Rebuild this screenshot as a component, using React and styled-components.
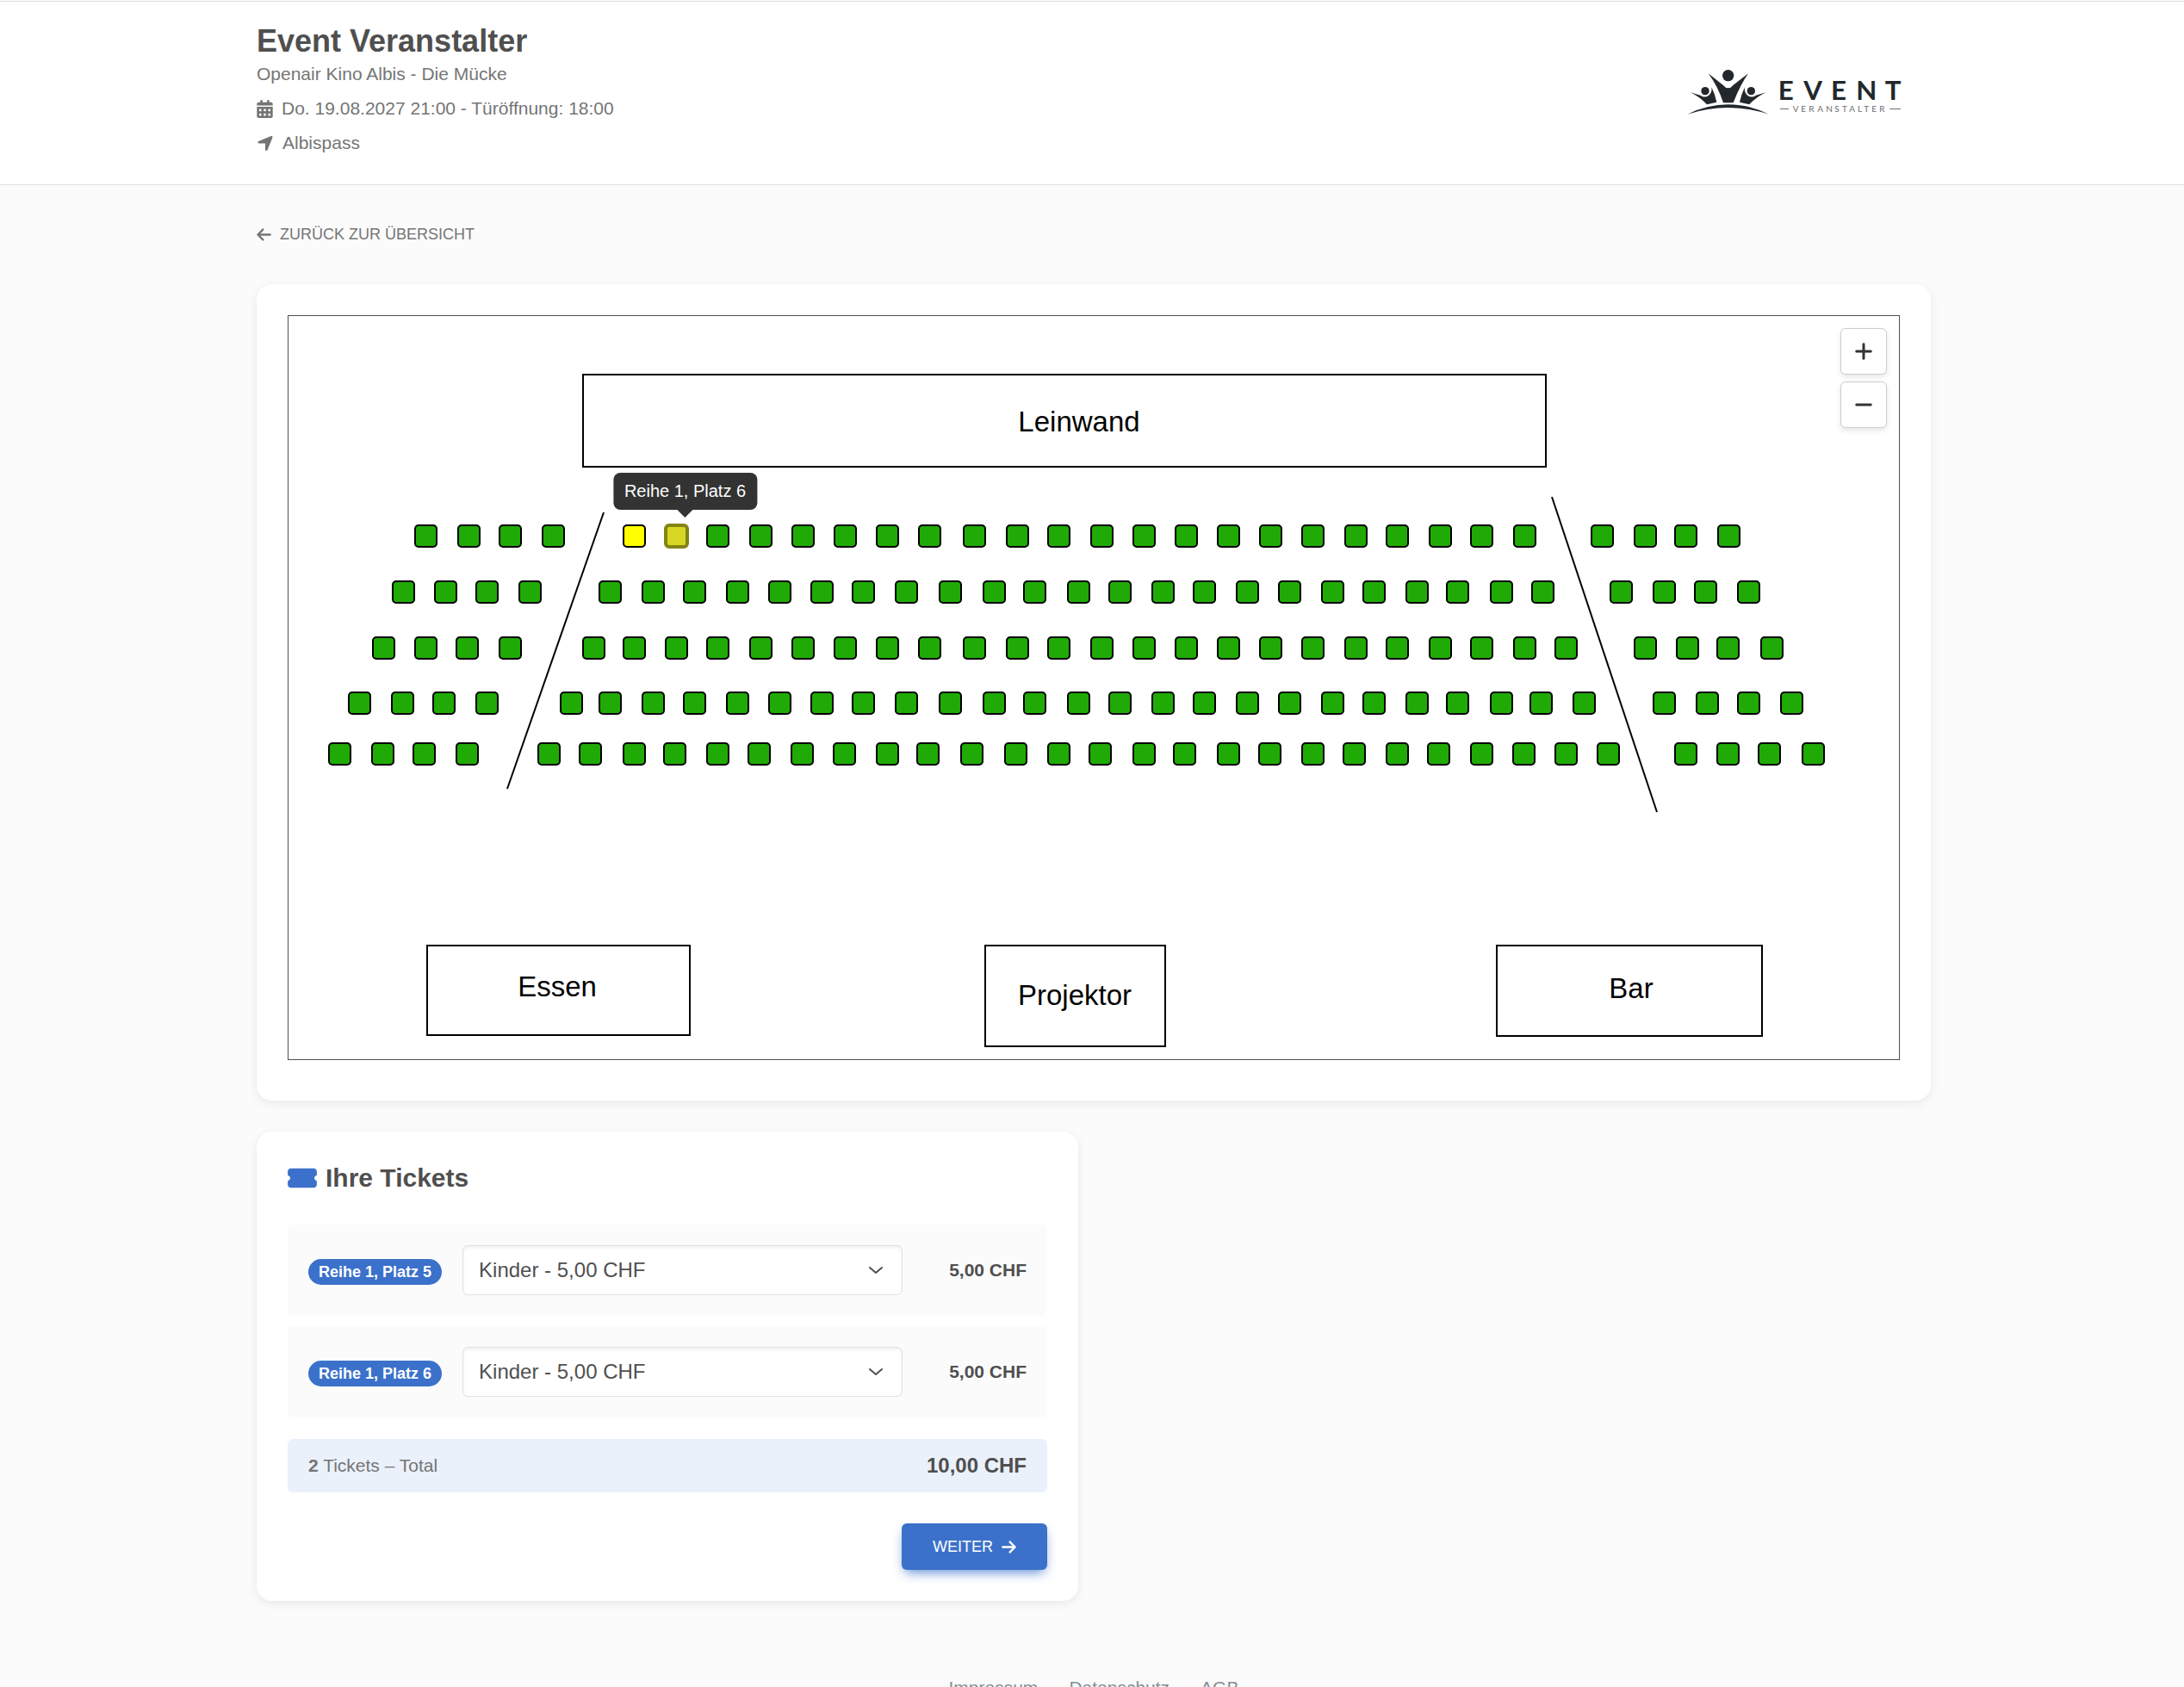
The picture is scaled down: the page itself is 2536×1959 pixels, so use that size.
import React, { useState } from 'react';
import styled, { createGlobalStyle, css } from 'styled-components';
import {
  FaArrowLeft,
  FaArrowRight,
  FaCalendarDays,
  FaLocationArrow,
  FaMinus,
  FaPlus,
  FaTicketSimple,
} from 'react-icons/fa6';

const GlobalStyle = createGlobalStyle`
  * {
    box-sizing: border-box;
  }

  body {
    margin: 0;
    background-color: #fbfbfb;
    color: #4f4f4f;
    font-family: "Liberation Sans", Arial, sans-serif;
    font-size: 24px;
    line-height: 36px;
  }
`;

const Page = styled.div`
  display: flex;
  flex-direction: column;
  padding-top: 1px;
`;

const Container = styled.div`
  width: 100%;
  max-width: 1996px;
  margin: 0 auto;
  padding: 0 24px 0 28px;
`;

const Header = styled.header`
  background-color: #fff;
  border-top: 1px solid #e0e0e0;
  border-bottom: 1px solid #e0e0e0;
`;

const HeaderInner = styled(Container)`
  display: flex;
  justify-content: space-between;
  align-items: flex-start;
  padding-top: 24px;
  padding-bottom: 28px;
`;

const EventInfo = styled.div`
  display: flex;
  flex-direction: column;
  gap: 6px;
  color: #757575;
  font-size: 21px;
  line-height: 34px;
`;

const Title = styled.h1`
  margin: 0 0 -6px;
  color: #4f4f4f;
  font-size: 36px;
  line-height: 43px;
`;

const InfoLine = styled.div`
  display: flex;
  align-items: center;
  gap: 10px;

  svg {
    width: ${({ $iconWidth }) => $iconWidth}px;
    height: 21px;
  }
`;

const LogoSvg = styled.svg`
  width: 300px;
  height: 160px;
  margin-right: 12px;
`;

const BackLink = styled.a`
  display: inline-flex;
  align-items: center;
  gap: 10px;
  margin: 44px 0;
  color: #757575;
  font-size: 18px;
  line-height: 27px;
  text-decoration: none;
  text-transform: uppercase;

  svg {
    width: 17px;
    height: 19px;
  }
`;

const Main = styled(Container)`
  display: flex;
  flex-direction: column;
  align-items: flex-start;
`;

const Card = styled.section`
  width: 100%;
  padding: 36px;
  background-color: #fff;
  border-radius: 18px;
  box-shadow: 0 3px 12px rgba(0, 0, 0, 0.08);
`;

const MapCard = styled(Card)`
  margin-bottom: 36px;
  padding-bottom: 47px;
`;

const MapFrame = styled.div`
  position: relative;
  border: 1px solid #4f4f4f;
`;

const MapSvg = styled.svg`
  display: block;
  width: 100%;
  height: auto;
  font-size: 33px;
`;

const Seat = styled.rect`
  fill: #20aa05;
  stroke: #000;
  stroke-width: 2;
  cursor: pointer;

  ${({ $selected }) => $selected && css`
    fill: #ff0;
  `}

  ${({ $active }) => $active && css`
    fill: #d8d824;
    stroke: #838316;
    stroke-width: 4;
  `}
`;

const Tooltip = styled.div`
  position: absolute;
  left: calc(461 / 1872 * 100%);
  top: calc(226 / 865 * 100%);
  transform: translate(-50%, -100%);
  padding: 10px 13px;
  background-color: #333;
  border-radius: 8px;
  color: #fff;
  font-size: 20px;
  line-height: 23px;
  white-space: nowrap;

  &::after {
    content: "";
    position: absolute;
    top: 100%;
    left: calc(50% - 9px);
    border: 9px solid transparent;
    border-top-color: #333;
    border-bottom-width: 0;
  }
`;

const ZoomControls = styled.div`
  position: absolute;
  top: 14px;
  right: 14px;
  display: flex;
  flex-direction: column;
  gap: 8px;
`;

const ZoomButton = styled.button`
  display: flex;
  align-items: center;
  justify-content: center;
  width: 54px;
  height: 54px;
  padding: 0;
  background-color: #fff;
  border: 1px solid #ccc;
  border-radius: 6px;
  box-shadow: 0 3px 6px rgba(0, 0, 0, 0.1);
  color: #333;
  font-size: 24px;
`;

const TicketCard = styled(Card)`
  width: calc(50% - 18px);
`;

const TicketTitle = styled.h2`
  display: flex;
  align-items: center;
  gap: 10px;
  margin: 0 0 36px;
  font-size: 30px;
  line-height: 36px;

  svg {
    width: 34px;
    height: 30px;
    color: #3b71ca;
  }
`;

const TicketList = styled.div`
  display: flex;
  flex-direction: column;
  gap: 12px;
`;

const TicketRow = styled.div`
  display: grid;
  grid-template-columns: auto 1fr 120px;
  align-items: center;
  gap: 24px;
  padding: 24px;
  background-color: #fbfbfb;
  border-radius: 6px;
`;

const Badge = styled.span`
  display: inline-block;
  padding: 6px 12px;
  background-color: #3b71ca;
  border-radius: 15px;
  color: #fff;
  font-size: 18px;
  font-weight: bold;
  line-height: 18px;
`;

const SelectWrap = styled.div`
  position: relative;

  svg {
    position: absolute;
    top: 50%;
    right: 21px;
    width: 20px;
    height: 20px;
    transform: translateY(-50%);
    pointer-events: none;
  }
`;

const Select = styled.select`
  display: block;
  width: 100%;
  height: 58px;
  padding: 0 54px 0 18px;
  appearance: none;
  background-color: #fff;
  border: 1px solid #e0e0e0;
  border-radius: 6px;
  box-shadow: inset 0 2px 4px rgba(0, 0, 0, 0.06);
  color: #4f4f4f;
  font: inherit;
`;

const Price = styled.div`
  font-size: 21px;
  font-weight: bold;
  text-align: right;
`;

const Total = styled.div`
  display: flex;
  justify-content: space-between;
  align-items: center;
  margin: 25px 0 36px;
  padding: 13px 24px;
  background-color: #eaf1fb;
  border-radius: 6px;
  color: #757575;
  font-size: 21px;
`;

const TotalPrice = styled.strong`
  color: #4f4f4f;
  font-size: 24px;
`;

const NextButton = styled.button`
  display: flex;
  align-items: center;
  gap: 10px;
  height: 54px;
  margin-left: auto;
  padding: 0 36px;
  background-color: #3b71ca;
  border: 0;
  border-radius: 6px;
  box-shadow: 0 6px 14px -4px rgba(59, 113, 202, 0.9);
  color: #fff;
  font-family: inherit;
  font-size: 18px;
  text-transform: uppercase;

  svg {
    width: 17px;
    height: 19px;
  }
`;

const Footer = styled.footer`
  display: flex;
  justify-content: center;
  gap: 36px;
  margin-top: 85px;
  padding-left: 4px;
  font-size: 21px;
  line-height: 32px;

  a {
    color: #858e96;
    text-decoration: none;
  }
`;

// seat centres per row: left block, middle block, right block
const rows = [
  {
    y: 257,
    left: [161, 211, 259, 309],
    middle: [403, 452, 500, 550, 599, 648, 697, 746, 798, 848, 896, 946, 995, 1044, 1093, 1142, 1191, 1241, 1289, 1339, 1387, 1437],
    right: [1527, 1577, 1624, 1674],
  },
  {
    y: 322,
    left: [135, 184, 232, 282],
    middle: [375, 425, 473, 523, 572, 621, 669, 719, 770, 821, 868, 919, 967, 1017, 1065, 1115, 1164, 1214, 1262, 1312, 1359, 1410, 1458],
    right: [1549, 1599, 1647, 1697],
  },
  {
    y: 387,
    left: [112, 161, 209, 259],
    middle: [356, 403, 452, 500, 550, 599, 648, 697, 746, 798, 848, 896, 946, 995, 1044, 1093, 1142, 1191, 1241, 1289, 1339, 1387, 1437, 1485],
    right: [1577, 1626, 1673, 1724],
  },
  {
    y: 451,
    left: [84, 134, 182, 232],
    middle: [330, 375, 425, 473, 523, 572, 621, 669, 719, 770, 821, 868, 919, 967, 1017, 1065, 1115, 1164, 1214, 1262, 1312, 1359, 1410, 1456, 1506],
    right: [1599, 1649, 1697, 1747],
  },
  {
    y: 510,
    left: [61, 111, 159, 209],
    middle: [304, 352, 403, 450, 500, 548, 598, 647, 697, 744, 795, 846, 896, 944, 995, 1042, 1093, 1141, 1191, 1239, 1289, 1337, 1387, 1436, 1485, 1534],
    right: [1624, 1673, 1721, 1772],
  },
];

const areas = [
  { label: 'Leinwand', x: 343, y: 69, width: 1118, height: 107, textX: 919, textY: 135 },
  { label: 'Essen', x: 162, y: 732, width: 305, height: 104, textX: 313, textY: 791 },
  { label: 'Projektor', x: 810, y: 732, width: 209, height: 117, textX: 914, textY: 801 },
  { label: 'Bar', x: 1404, y: 732, width: 308, height: 105, textX: 1560, textY: 793 },
];

const prices = { Kinder: 5, Erwachsene: 10 };

const formatPrice = (value) => `${value.toFixed(2).replace('.', ',')} CHF`;

const Logo = () => (
  <LogoSvg viewBox="30 -72 900 480" role="img" aria-label="Event Veranstalter">
    <g fill="#22282b">
      <circle cx="260" cy="113" r="20" />
      <path d="M191 106 L242 146 Q260 168 278 146 L330 106 Q302 146 278 208 H243 Q224 150 191 106Z" />
      <circle cx="180" cy="167" r="14" />
      <path d="M129 172 L163 182 Q181 194 195 180 Q205 170 202 153 Q214 178 220 206 L186 214 Q163 189 129 172Z" />
      <circle cx="340" cy="167" r="14" />
      <path d="M391 172 L357 182 Q339 194 325 180 Q315 170 318 153 Q306 178 300 206 L334 214 Q357 189 391 172Z" />
      <path d="M118 248 Q260 180 402 248 Q260 202 118 248Z" />
      <text x="434 523 618 706 806" y="198" fontFamily="Lato, sans-serif" fontSize="94" fontWeight="bold">EVENT</text>
    </g>
    <g fill="#6a6e70">
      <text x="485 514 541 571 601 631 657 682 711 733 760 787" y="240" fontFamily="Lato, sans-serif" fontSize="30">
        VERANSTALTER
      </text>
      <rect x="441" y="228" width="30" height="3" />
      <rect x="823" y="228" width="38" height="3" />
    </g>
  </LogoSvg>
);

const SeatMap = () => (
  <MapFrame>
    <MapSvg viewBox="1 1 1870 863" role="img" aria-label="Saalplan">
      <g fill="none" stroke="#000" strokeWidth="2">
        {areas.map((a) => (
          <rect key={a.label} x={a.x} y={a.y} width={a.width} height={a.height} />
        ))}
        <line x1="367" y1="229" x2="255" y2="550" />
        <line x1="1468" y1="211" x2="1590" y2="577" />
      </g>
      {areas.map((a) => (
        <text key={a.label} x={a.textX} y={a.textY} textAnchor="middle">{a.label}</text>
      ))}
      {rows.map((row, rowIndex) =>
        [...row.left, ...row.middle, ...row.right].map((x, i) => (
          <Seat
            key={x}
            x={x - 13}
            y={row.y - 13}
            width="25"
            height="25"
            rx="4"
            $selected={rowIndex === 0 && i === 4}
            $active={rowIndex === 0 && i === 5}
          />
        ))
      )}
    </MapSvg>
    <Tooltip role="tooltip">Reihe 1, Platz 6</Tooltip>
    <ZoomControls>
      <ZoomButton type="button" aria-label="Vergrössern"><FaPlus /></ZoomButton>
      <ZoomButton type="button" aria-label="Verkleinern"><FaMinus /></ZoomButton>
    </ZoomControls>
  </MapFrame>
);

const Ticket = ({ seat, category, onChange }) => (
  <TicketRow>
    <div>
      <Badge>{seat}</Badge>
    </div>
    <SelectWrap>
      <Select aria-label={seat} value={category} onChange={(e) => onChange(e.target.value)}>
        {Object.keys(prices).map((name) => (
          <option key={name} value={name}>{name} - {formatPrice(prices[name])}</option>
        ))}
      </Select>
      <svg viewBox="0 0 20 20" fill="none" stroke="#4f4f4f" strokeWidth="2" strokeLinecap="round" strokeLinejoin="round">
        <path d="M3 7l7 6 7-6" />
      </svg>
    </SelectWrap>
    <Price>{formatPrice(prices[category])}</Price>
  </TicketRow>
);

const App = () => {
  const [tickets, setTickets] = useState([
    { seat: 'Reihe 1, Platz 5', category: 'Kinder' },
    { seat: 'Reihe 1, Platz 6', category: 'Kinder' },
  ]);

  const changeCategory = (seat, category) => {
    setTickets(tickets.map((t) => (t.seat === seat ? { ...t, category } : t)));
  };

  const total = tickets.reduce((sum, t) => sum + prices[t.category], 0);

  return (
    <Page>
      <GlobalStyle />
      <Header>
        <HeaderInner>
          <EventInfo>
            <Title>Event Veranstalter</Title>
            <div>Openair Kino Albis - Die Mücke</div>
            <InfoLine $iconWidth={19}><FaCalendarDays />Do. 19.08.2027 21:00 - Türöffnung: 18:00</InfoLine>
            <InfoLine $iconWidth={20}><FaLocationArrow />Albispass</InfoLine>
          </EventInfo>
          <Logo />
        </HeaderInner>
      </Header>
      <Main as="main">
        <BackLink href="#"><FaArrowLeft />Zurück zur Übersicht</BackLink>
        <MapCard>
          <SeatMap />
        </MapCard>
        <TicketCard>
          <TicketTitle><FaTicketSimple />Ihre Tickets</TicketTitle>
          <TicketList>
            {tickets.map((t) => (
              <Ticket key={t.seat} {...t} onChange={(value) => changeCategory(t.seat, value)} />
            ))}
          </TicketList>
          <Total>
            <span><strong>{tickets.length}</strong> Tickets – Total</span>
            <TotalPrice>{formatPrice(total)}</TotalPrice>
          </Total>
          <NextButton type="button">Weiter<FaArrowRight /></NextButton>
        </TicketCard>
      </Main>
      <Footer>
        <a href="#">Impressum</a>
        <a href="#">Datenschutz</a>
        <a href="#">AGB</a>
      </Footer>
    </Page>
  );
};

export default App;
